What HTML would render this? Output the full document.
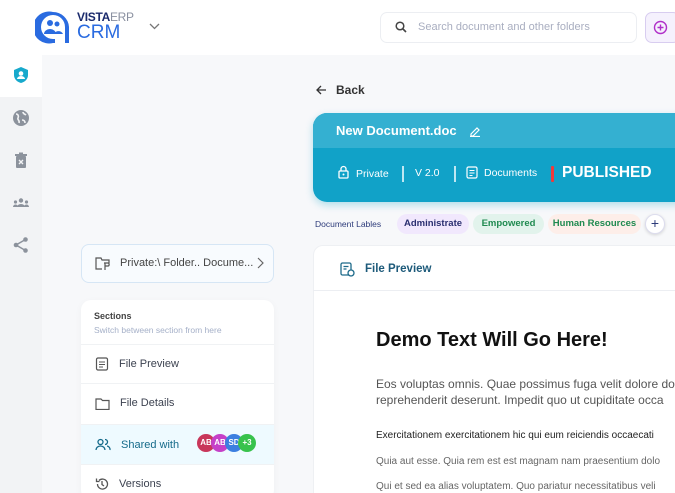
<!DOCTYPE html>
<html><head><meta charset="utf-8"><style>
*{box-sizing:border-box;margin:0;padding:0}
html,body{width:675px;height:493px;overflow:hidden}
body{background:#f7f8fa;font-family:"Liberation Sans",sans-serif;position:relative}
.a{position:absolute}
.hdr{left:0;top:0;width:675px;height:55px;background:#fff}
.side{left:0;top:55px;width:42px;height:438px;background:#f2f3f5}
.ico{position:absolute;left:12px;width:18px;height:18px}
.card{background:#fff;border-radius:10px}
.row{position:absolute;left:0;width:193px;height:39px;border-top:1px solid #f0f2f4;font-size:11px;color:#3c4250;display:flex;align-items:center;padding-left:14px;gap:10px}
.pill{position:absolute;top:214px;height:20px;border-radius:10px;font-size:9.5px;font-weight:bold;line-height:20px;text-align:center}
.av{position:absolute;top:434px;width:18px;height:18px;border-radius:50%;color:#fff;font-size:8px;line-height:18px;text-align:center;font-weight:bold}
</style></head><body>
<div class="a hdr"></div>
<svg class="a" style="left:35px;top:10px" width="36" height="35" viewBox="0 0 36 35"><path d="M18 2a16 16 0 1 0 0 31h2v-4h-2a12 12 0 1 1 12-12v16h4V17A16 16 0 0 0 18 2z" fill="#2a6be0"/><circle cx="15" cy="13" r="3" fill="#2a6be0"/><circle cx="22" cy="14" r="2.5" fill="#2a6be0"/><path d="M9 24a6 5 0 0 1 12 0zM19 24a5 5 0 0 1 9 0z" fill="#2a6be0"/></svg>
<div class="a" style="left:77px;top:10px;font-size:12px;font-weight:bold;color:#1a2a6c;letter-spacing:-.3px">VISTA<span style="font-weight:normal;color:#8a90a0">ERP</span></div>
<div class="a" style="left:77px;top:22px;font-size:19px;color:#2a6be0">CRM</div>
<svg class="a" style="left:149px;top:23px" width="11" height="7"><path d="M1 1l4.5 4.5L10 1" stroke="#777" stroke-width="1.3" fill="none"/></svg>
<div class="a" style="left:380px;top:12px;width:257px;height:31px;border:1px solid #eceef2;border-radius:7px;background:#fff"></div>
<svg class="a" style="left:395px;top:21px" width="12" height="12"><circle cx="5" cy="5" r="3.8" stroke="#444" stroke-width="1.5" fill="none"/><path d="M8 8l3 3" stroke="#444" stroke-width="1.6"/></svg>
<div class="a" style="left:418px;top:21px;font-size:11px;color:#a9aec0">Search document and other folders</div>
<div class="a" style="left:645px;top:12px;width:35px;height:31px;border:1px solid #d8cdf0;border-radius:7px;background:#f5f1fd"></div>
<svg class="a" style="left:653px;top:20px" width="15" height="15"><circle cx="7.5" cy="7.5" r="6" stroke="#b02fc9" stroke-width="1.4" fill="none"/><path d="M7.5 4.5v6M4.5 7.5h6" stroke="#b02fc9" stroke-width="1.4"/></svg>

<div class="a side"></div>
<div class="a" style="left:0;top:55px;width:42px;height:42px;background:#fff"></div>
<svg class="ico" style="top:66px" viewBox="0 0 18 18"><path d="M9 1l7 3v5c0 4-3 7-7 8-4-1-7-4-7-8V4z" fill="#17a9cc"/><circle cx="9" cy="7.5" r="2.3" fill="#fff"/><path d="M5 13a4 3 0 0 1 8 0z" fill="#fff"/></svg>
<svg class="ico" style="top:109px" viewBox="0 0 18 18"><circle cx="9" cy="9" r="8" fill="#8c929c"/><path d="M4 5c2 0 3 2 2 4s2 2 1 5M11 3c0 2 2 2 3 3M10 11c2 0 3 1 3 3" stroke="#f2f3f5" stroke-width="1.6" fill="none"/></svg>
<svg class="ico" style="top:151px" viewBox="0 0 18 18"><rect x="3" y="3" width="12" height="2" fill="#8c929c"/><rect x="7" y="1.5" width="4" height="2" fill="#8c929c"/><rect x="4" y="5" width="10" height="12" rx="1" fill="#8c929c"/><path d="M7 9l4 4M11 9l-4 4" stroke="#f2f3f5" stroke-width="1.4"/></svg>
<svg class="ico" style="top:194px" viewBox="0 0 18 18"><circle cx="9" cy="6.5" r="2.2" fill="#8c929c"/><circle cx="3.5" cy="8" r="1.6" fill="#8c929c"/><circle cx="14.5" cy="8" r="1.6" fill="#8c929c"/><path d="M5 13a4 3 0 0 1 8 0zM1 13a2.5 2.5 0 0 1 5 0zM12 13a2.5 2.5 0 0 1 5 0z" fill="#8c929c"/></svg>
<svg class="ico" style="top:236px" viewBox="0 0 18 18"><circle cx="13.5" cy="3.5" r="2.3" fill="#8c929c"/><circle cx="4" cy="9" r="2.3" fill="#8c929c"/><circle cx="13.5" cy="14.5" r="2.3" fill="#8c929c"/><path d="M13.5 3.5L4 9l9.5 5.5" stroke="#8c929c" stroke-width="1.5" fill="none"/></svg>

<div class="a" style="left:81px;top:244px;width:193px;height:39px;border:1px solid #d6e6f5;border-radius:8px;background:#f8fbfe"></div>
<svg class="a" style="left:95px;top:257px" width="16" height="14"><path d="M7 12H1V1h5l1 2h7v3" stroke="#555" stroke-width="1.2" fill="none"/><path d="M9 6h4c1.5 0 1.5 3 0 3H10M10 6v7" stroke="#555" stroke-width="1.2" fill="none"/></svg>
<div class="a" style="left:120px;top:257px;font-size:11px;color:#444">Private:\ Folder.. Docume...</div>
<svg class="a" style="left:257px;top:257px" width="7" height="12"><path d="M1 1l5 5-5 5" stroke="#666" stroke-width="1.2" fill="none"/></svg>

<div class="a card" style="left:81px;top:300px;width:193px;height:200px;box-shadow:0 2px 8px rgba(0,0,0,.04);overflow:hidden">
<div class="a" style="left:13px;top:11px;font-size:9px;font-weight:bold;color:#444">Sections</div>
<div class="a" style="left:13px;top:25px;font-size:8.5px;color:#a5b0c8">Switch between section from here</div>
<div class="row" style="top:44px"><svg width="14" height="14"><rect x="1.5" y="1" width="11" height="12" rx="1.5" stroke="#555" stroke-width="1.2" fill="none"/><path d="M4 5h6M4 7.5h6M4 10h4" stroke="#555" stroke-width="1.1"/></svg>File Preview</div>
<div class="row" style="top:83px"><svg width="15" height="13"><path d="M1 2h5l1.5 1.5H14v9H1z" stroke="#555" stroke-width="1.2" fill="none"/></svg>File Details</div>
<div class="row" style="top:124px;height:40px;background:#eefaff;color:#146a8a"><svg width="16" height="13"><circle cx="5.5" cy="4" r="2.5" stroke="#146a8a" stroke-width="1.3" fill="none"/><path d="M1 12a4.5 4 0 0 1 9 0M10 1.5a2.5 2.5 0 0 1 0 5M12 8a3.5 3.5 0 0 1 3 4" stroke="#146a8a" stroke-width="1.3" fill="none"/></svg>Shared with</div>
<div class="row" style="top:164px"><svg width="14" height="14"><path d="M2.5 7a5 5 0 1 0 1.5-3.5M1.5 1.5v3h3M7 4v3.5l2 1.5" stroke="#555" stroke-width="1.3" fill="none"/></svg>Versions</div>
</div>
<div class="av" style="left:197px;background:#c8365a">AB</div>
<div class="av" style="left:211px;background:#c540c8">AB</div>
<div class="av" style="left:225px;background:#3b7fe0">SD</div>
<div class="av" style="left:238px;background:#38c24c">+3</div>

<svg class="a" style="left:316px;top:85px" width="11" height="10"><path d="M10 5H1.5M5 1L1 5l4 4" stroke="#333" stroke-width="1.3" fill="none"/></svg>
<div class="a" style="left:336px;top:83px;font-size:12px;font-weight:bold;color:#333">Back</div>

<div class="a" style="left:313px;top:113px;width:380px;height:89px;border-radius:14px;background:#11a2c8;overflow:hidden;box-shadow:0 3px 8px rgba(17,162,200,.3)">
<div style="height:35px;background:#34b0d1"></div></div>
<div class="a" style="left:336px;top:123px;font-size:13px;font-weight:bold;color:#fff">New Document.doc</div>
<svg class="a" style="left:469px;top:125px" width="12" height="12"><path d="M2 9l6-6 2 2-6 6H2zM1 11.5h10" stroke="#fff" stroke-width="1.2" fill="none"/></svg>
<svg class="a" style="left:338px;top:165px" width="11" height="14"><path d="M3 6V4a2.5 2.5 0 0 1 5 0v2" stroke="#fff" stroke-width="1.3" fill="none"/><rect x="1" y="6" width="9" height="7" rx="1" stroke="#fff" stroke-width="1.3" fill="none"/><circle cx="5.5" cy="9.5" r="1" fill="#fff"/></svg>
<div class="a" style="left:356px;top:168px;font-size:10.5px;color:#fff">Private</div>
<div class="a" style="left:402px;top:166px;width:1.5px;height:16px;background:#bfe7f2"></div>
<div class="a" style="left:415px;top:167px;font-size:10.5px;color:#fff">V 2.0</div>
<div class="a" style="left:454px;top:166px;width:1.5px;height:16px;background:#bfe7f2"></div>
<svg class="a" style="left:466px;top:166px" width="12" height="13"><rect x="1" y="1" width="10" height="11" rx="1.5" stroke="#fff" stroke-width="1.2" fill="none"/><path d="M3.5 4.5h5M3.5 7h5M3.5 9.5h3" stroke="#fff" stroke-width="1"/></svg>
<div class="a" style="left:484px;top:167px;font-size:10.5px;color:#fff">Documents</div>
<div class="a" style="left:551px;top:166px;width:3px;height:16px;background:#f03a3a;border-radius:1px"></div>
<div class="a" style="left:562px;top:164px;font-size:15.5px;color:#fff;font-weight:bold">PUBLISHED</div>

<div class="a" style="left:315px;top:219px;font-size:8.5px;color:#2d3b7a">Document Lables</div>
<div class="pill" style="left:397px;width:72px;background:#f1e8fd;color:#2a2f70">Administrate</div>
<div class="pill" style="left:473px;width:71px;background:#e2f3ec;color:#1f8a50">Empowered</div>
<div class="pill" style="left:548px;width:93px;background:#fdeee9;color:#1f8a50">Human Resources</div>
<div class="a" style="left:645px;top:214px;width:20px;height:20px;border-radius:50%;background:#fff;border:1px solid #dde;box-shadow:0 1px 3px rgba(0,0,0,.15);color:#2d3b7a;font-size:14px;line-height:17px;text-align:center">+</div>

<div class="a card" style="left:313px;top:245px;width:380px;height:260px;border:1px solid #eef0f3"></div>
<div class="a" style="left:313px;top:290px;width:362px;height:1px;background:#eceef2"></div>
<svg class="a" style="left:340px;top:262px" width="15" height="15"><rect x="1" y="1" width="10" height="12" rx="1.5" stroke="#1d6a8a" stroke-width="1.3" fill="none"/><path d="M3.5 4.5h5M3.5 7h3" stroke="#1d6a8a" stroke-width="1.2"/><circle cx="11" cy="11" r="3" fill="#fff" stroke="#1d6a8a" stroke-width="1.3"/></svg>
<div class="a" style="left:365px;top:263px;font-size:11.5px;font-weight:bold;color:#1d5a7a">File Preview</div>
<div class="a" style="left:376px;top:329px;font-size:20px;font-weight:bold;color:#111;white-space:nowrap">Demo Text Will Go Here!</div>
<div class="a" style="left:376px;top:376px;font-size:12px;line-height:16px;color:#555;white-space:nowrap">Eos voluptas omnis. Quae possimus fuga velit dolore do<br>reprehenderit deserunt. Impedit quo ut cupiditate occa</div>
<div class="a" style="left:376px;top:430px;font-size:10px;color:#222;white-space:nowrap">Exercitationem exercitationem hic qui eum reiciendis occaecati</div>
<div class="a" style="left:376px;top:456px;font-size:10px;color:#666;white-space:nowrap">Quia aut esse. Quia rem est est magnam nam praesentium dolo</div>
<div class="a" style="left:376px;top:481px;font-size:10px;color:#666;white-space:nowrap">Qui et sed ea alias voluptatem. Quo pariatur necessitatibus veli</div>
</body></html>
